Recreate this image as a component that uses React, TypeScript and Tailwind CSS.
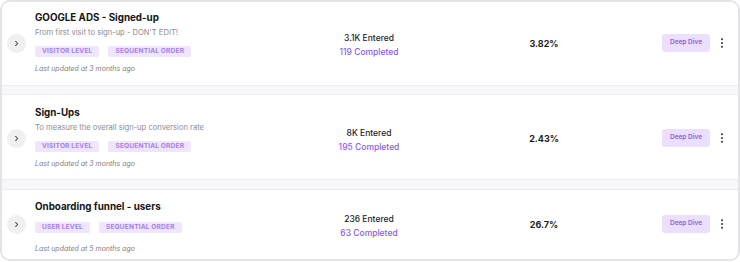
import React from 'react';

interface Funnel {
  title: string;
  description?: string;
  level: string;
  entered: string;
  completed: string;
  rate: string;
  updated: string;
  height: string;
}

const funnels: Funnel[] = [
  {
    title: 'GOOGLE ADS - Signed-up',
    description: "From first visit to sign-up - DON'T EDIT!",
    level: 'VISITOR LEVEL',
    entered: '3.1K Entered',
    completed: '119 Completed',
    rate: '3.82%',
    updated: 'Last updated at 3 months ago',
    height: 'h-[83px] pt-[9px]',
  },
  {
    title: 'Sign-Ups',
    description: 'To measure the overall sign-up conversion rate',
    level: 'VISITOR LEVEL',
    entered: '8K Entered',
    completed: '195 Completed',
    rate: '2.43%',
    updated: 'Last updated at 3 months ago',
    height: 'h-[84px] pt-[11px]',
  },
  {
    title: 'Onboarding funnel - users',
    level: 'USER LEVEL',
    entered: '236 Entered',
    completed: '63 Completed',
    rate: '26.7%',
    updated: 'Last updated at 5 months ago',
    height: 'flex-1 pt-[10px]',
  },
];

function Tag({ label }: { label: string }) {
  return (
    <span className="flex h-[11px] items-center rounded-[2px] bg-[#efe5fd] px-[7px] text-[6.6px] font-bold leading-none tracking-[0.15px] text-[#a57ff0]">
      {label}
    </span>
  );
}

function FunnelRow({ funnel }: { funnel: Funnel }) {
  return (
    <div className={`flex shrink-0 items-center bg-white pl-[5px] pr-[14px] ${funnel.height}`}>
      <button className="flex h-[19px] w-[19px] shrink-0 items-center justify-center self-start rounded-full bg-[#f0f0f3] text-[#444] mt-[23px] data-[small=true]:mt-[15px]" data-small={!funnel.description}>
        <svg width="7" height="7" viewBox="0 0 24 24" fill="none" stroke="currentColor" strokeWidth={3.5} strokeLinecap="round" strokeLinejoin="round">
          <path d="M9 5l7 7-7 7" />
        </svg>
      </button>

      <div className="ml-[9px] flex w-[238px] flex-col self-start">
        <div className="text-[9.8px] font-bold leading-[14px] text-[#151517]">{funnel.title}</div>
        {funnel.description && (
          <div className="mt-[2px] text-[7.6px] leading-[12px] text-[#8c8c92]">{funnel.description}</div>
        )}
        <div className={`flex gap-[9px] ${funnel.description ? 'mt-[7px]' : 'mt-[8px]'}`}>
          <Tag label={funnel.level} />
          <Tag label="SEQUENTIAL ORDER" />
        </div>
        <div className={`text-[7px] italic leading-[12px] text-[#808086] ${funnel.description ? 'mt-[6px]' : 'mt-[10px]'}`}>
          {funnel.updated}
        </div>
      </div>

      <div className="flex w-[192px] flex-col items-center self-start text-[8.5px] leading-[14px] mt-[20px] data-[small=true]:mt-[12px]" data-small={!funnel.description}>
        <span className="font-medium text-[#1c1c1f]">{funnel.entered}</span>
        <span className="font-medium text-[#8a5ce8]">{funnel.completed}</span>
      </div>

      <div className="w-[158px] self-start text-center text-[9px] font-bold leading-[14px] text-[#1c1c1f] mt-[26px] data-[small=true]:mt-[18px]" data-small={!funnel.description}>
        {funnel.rate}
      </div>

      <div className="flex-1" />

      <div className="flex items-center self-start mt-[23px] data-[small=true]:mt-[15px]" data-small={!funnel.description}>
        <button className="flex h-[18px] w-[48px] items-center justify-center rounded-[3px] bg-[#ecdffd] text-[6.5px] font-semibold text-[#8a60e6]">
          Deep Dive
        </button>
        <svg className="ml-[10px] text-[#333]" width="4" height="10" viewBox="0 0 4 10" fill="currentColor">
          <circle cx="2" cy="1.3" r="1" />
          <circle cx="2" cy="5" r="1" />
          <circle cx="2" cy="8.7" r="1" />
        </svg>
      </div>
    </div>
  );
}

export default function App() {
  return (
    <div className="h-[262px] w-[740px] bg-white" style={{ fontFamily: 'Inter, "Noto Sans", sans-serif' }}>
      <div className="flex h-[261px] flex-col overflow-hidden rounded-[10px] border-2 border-[#e4e4e7]">
        {funnels.map((f, i) => (
          <React.Fragment key={f.title}>
            {i > 0 && (
              <div className={`shrink-0 border-y border-[#ececf0] bg-[#f7f7f9] ${i === 1 ? 'h-[10px]' : 'h-[11px]'}`} />
            )}
            <FunnelRow funnel={f} />
          </React.Fragment>
        ))}
      </div>
    </div>
  );
}
